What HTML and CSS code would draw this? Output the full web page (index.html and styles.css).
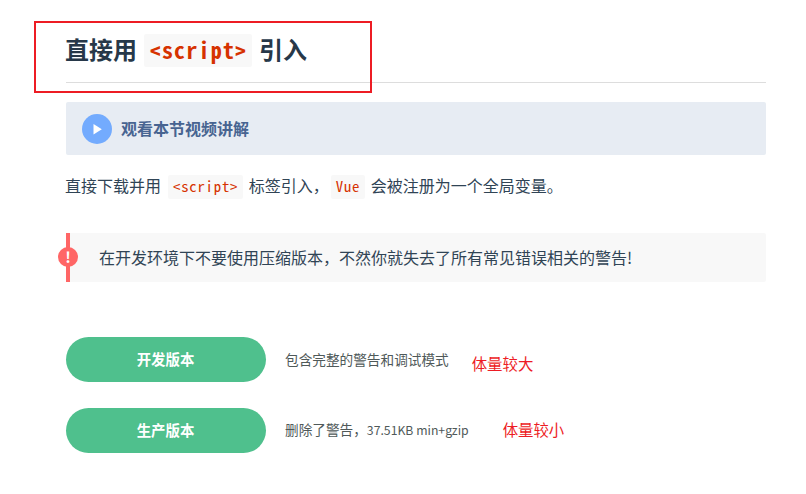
FILE: index.html
```html
<!DOCTYPE html>
<html lang="zh-CN">
<head>
<meta charset="utf-8">
<title>直接用 &lt;script&gt; 引入</title>
<link rel="stylesheet" href="styles.css">
</head>
<body>
<main class="content">
  <h2 class="title"><span>直接用</span><code>&lt;script&gt;</code><span>引入</span></h2>
  <div class="video">
    <svg class="play" viewBox="0 0 30 30"><circle cx="15" cy="15" r="15" fill="#73abfe"/><path d="M11.5 10v10.4l8.3-5.2z" fill="#fff"/></svg>
    <span>观看本节视频讲解</span>
  </div>
  <p class="intro"><span>直接下载并用</span><code>&lt;script&gt;</code><span class="mid">标签引入，</span><code>Vue</code><span>会被注册为一个全局变量。</span></p>
  <p class="tip"><span class="tip-text">在开发环境下不要使用压缩版本，不然你就失去了所有常见错误相关的警告!</span></p>
  <div class="row"><a class="button">开发版本</a><span class="desc">包含完整的警告和调试模式</span><span class="note note-dev">体量较大</span></div>
  <div class="row"><a class="button">生产版本</a><span class="desc">删除了警告，<span class="size">37.51KB min+gzip</span></span><span class="note note-prod">体量较小</span></div>
  <div class="mark"></div>
</main>
</body>
</html>
```
FILE: styles.css
```css
* { box-sizing: border-box; }
body { margin: 0; background: #fff; color: #304455; font: 16px/26px "Noto Sans CJK SC", sans-serif; }
.content { width: 700px; margin-left: 66px; padding-top: 25px; }
.title { display: flex; align-items: center; height: 58px; margin: 0; padding-bottom: 8px; border-bottom: 1px solid #ddd; color: #273849; font-size: 24px; line-height: 34px; white-space: nowrap; }
.title span { margin-left: -1px; padding-bottom: 2px; }
code { font-family: "Noto Sans Mono CJK SC", "DejaVu Sans Mono", monospace; color: #d63200; background: #f8f8f8; border-radius: 2px; }
.title code { width: 108px; height: 33px; margin: 1px 8px 0 7px; padding-left: 1px; text-align: center; font-size: 22px; letter-spacing: 1.2px; line-height: 30px; }
.video { display: flex; align-items: center; gap: 9px; height: 53px; margin-top: 19px; padding-left: 16px; background: #e7ecf3; border-radius: 2px; color: #486491; font-weight: 700; }
.video span { padding-bottom: 2px; }
.play { width: 30px; height: 30px; }
.intro { display: flex; align-items: center; height: 26px; margin: 18px 0 0 -1px; white-space: nowrap; }
.intro > span { padding-bottom: 2px; }
.intro code { height: 24px; margin: 1px 6px 0 7px; padding: 0 4.5px 0 5px; font-size: 14.8px; letter-spacing: 0.75px; line-height: 21px; }
.intro .mid { margin-right: -5px; }
.tip { position: relative; display: flex; align-items: center; height: 49px; margin: 34px 0 55px; padding-left: 29px; border-left: 4px solid #f66; border-radius: 0 2px 2px 0; background: #f8f8f8; white-space: nowrap; }
.tip-text { padding-bottom: 2px; }
.tip::before { content: "!"; position: absolute; top: 14px; left: -12px; width: 20px; height: 20px; border-radius: 50%; background: #f66; color: #fff; font-weight: 700; font-size: 15px; line-height: 19px; text-align: center; }
.row { display: flex; align-items: center; height: 45px; margin-bottom: 26px; white-space: nowrap; }
.button { width: 200px; height: 45px; margin-right: 19px; padding-right: 1px; border-radius: 23px; background: #4fc08d; color: #fff; font-size: 14.4px; font-weight: 700; line-height: 44px; text-align: center; }
.desc { padding-bottom: 2px; color: #4f5959; font-size: 13.65px; }
.size { font-size: 12.25px; }
.note { color: #ed1c24; font-size: 15.4px; }
.note-dev { margin-left: 23px; padding-top: 6px; }
.note-prod { margin-left: 34px; padding-bottom: 3px; }
.mark { position: absolute; left: 34px; top: 21px; width: 338px; height: 72px; border: 2px solid #ed1c24; }
```
